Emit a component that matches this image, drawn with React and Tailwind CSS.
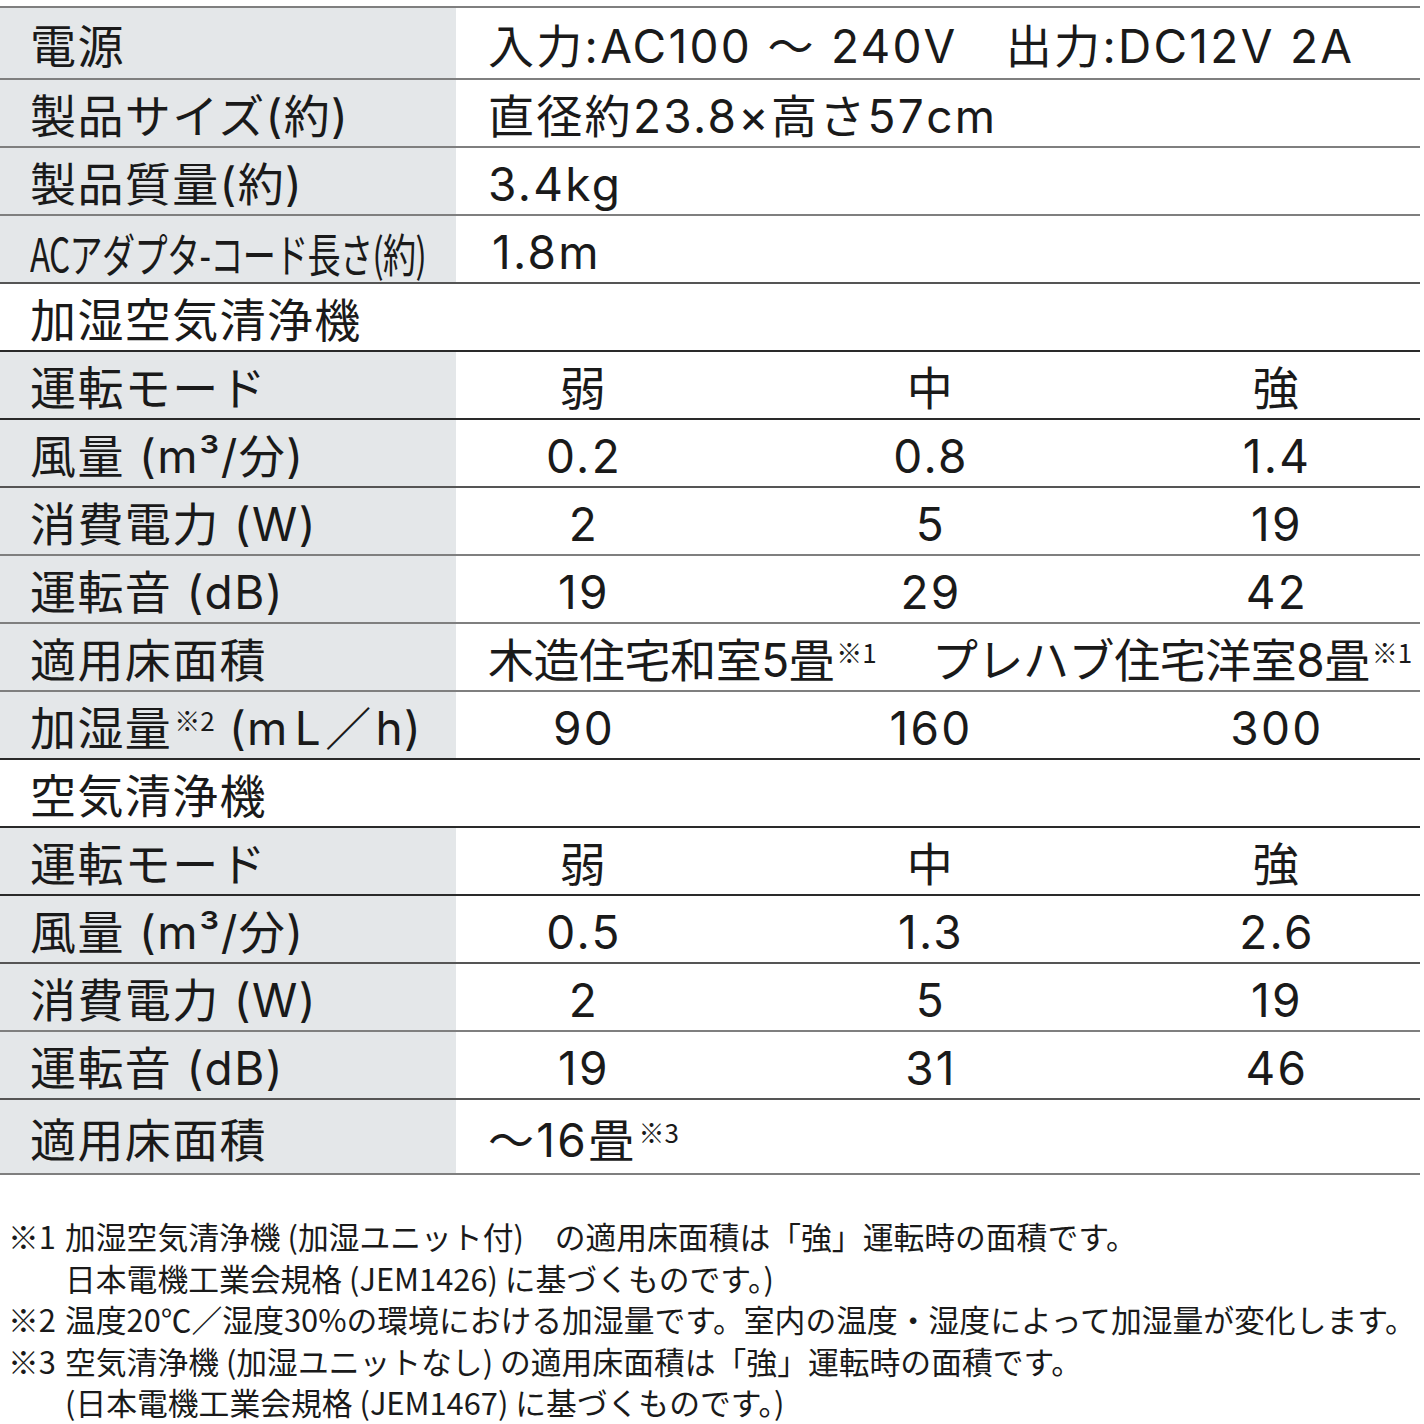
/**
 * SpecTable - product specifications sheet
 * Gray label column, centered 3-mode value columns, footnotes below
 */

import React from 'react'

const LINE = 'border-[#7f7f7f]'
const DARK = 'border-[#2a2a2a]'

function Sup({ children }) {
  return (
    <span className="text-[26px] relative -top-[14px] ml-[2px] tracking-normal font-['Noto_Sans_CJK_JP',sans-serif]">
      {children}
    </span>
  )
}

function Row({ label, children, tall = false, top = false, line = LINE }) {
  return (
    <div
      className={`flex border-b-2 ${line} ${top ? `border-t-2 ${LINE} h-[74px]` : ''} ${tall ? 'h-[75px]' : ''} ${!top && !tall ? 'h-[68px]' : ''}`}
    >
      <div className="w-[456px] shrink-0 bg-[#e4e7e9] flex items-center pl-[30px] pt-[6px] whitespace-nowrap">
        {label}
      </div>
      <div className="flex-1 flex items-center pt-[6px] whitespace-nowrap tracking-[0.05em]">{children}</div>
    </div>
  )
}

function Section({ title, line = DARK }) {
  return (
    <div className={`h-[68px] flex items-center pl-[30px] pt-[6px] border-b-2 ${line}`}>{title}</div>
  )
}

function Modes({ values }) {
  return (
    <div className="grid grid-cols-[256px_438px_254px] w-full">
      {values.map((v, i) => (
        <div key={i} className="text-center">{v}</div>
      ))}
    </div>
  )
}

function Note({ mark, lines }) {
  return (
    <div className="flex pl-[8px]">
      <div className="w-[57px] shrink-0">{mark}</div>
      <div>
        {lines.map((l, i) => (
          <div key={i}>{l}</div>
        ))}
      </div>
    </div>
  )
}

export default function App() {
  return (
    <div className="w-[1424px] h-[1424px] overflow-hidden bg-white text-[#1a1a1a] font-['Inter','Noto_Sans_CJK_JP',sans-serif]">
      <div className="w-[1420px] pt-[6px] text-[46px] leading-none tracking-[0.03em]">
        <Row top label="電源">
          <span className="pl-[32px]">入力:AC100 ～ 240V　出力:DC12V 2A</span>
        </Row>
        <Row label="製品サイズ(約)">
          <span className="pl-[32px]">直径約23.8×高さ57cm</span>
        </Row>
        <Row label="製品質量(約)">
          <span className="pl-[32px]">3.4kg</span>
        </Row>
        <Row
          label={
            <span className="inline-block origin-left scale-x-[0.72] tracking-[-0.02em] font-['Noto_Sans_CJK_JP',sans-serif]">
              ACアダプタ-コード長さ(約)
            </span>
          }
          line="border-[#555555]"
        >
          <span className="pl-[36px]">1.8m</span>
        </Row>

        <Section title="加湿空気清浄機" />
        <Row label="運転モード" line={DARK}>
          <Modes values={['弱', '中', '強']} />
        </Row>
        <Row label="風量 (m³/分)" line="border-[#555555]">
          <Modes values={['0.2', '0.8', '1.4']} />
        </Row>
        <Row label="消費電力 (W)">
          <Modes values={['2', '5', '19']} />
        </Row>
        <Row label="運転音 (dB)">
          <Modes values={['19', '29', '42']} />
        </Row>
        <Row label="適用床面積">
          <div className="flex pl-[32px] tracking-[-0.01em]">
            <span className="w-[444px]">
              木造住宅和室5畳<Sup>※1</Sup>
            </span>
            <span>
              プレハブ住宅洋室8畳<Sup>※1</Sup>
            </span>
          </div>
        </Row>
        <Row
          label={
            <span>
              加湿量<Sup>※2</Sup> (m<span className="ml-[6px]">L</span>
              <span className="mx-[3px]">／</span>h)
            </span>
          }
          line={DARK}
        >
          <Modes values={['90', '160', '300']} />
        </Row>

        <Section title="空気清浄機" />
        <Row label="運転モード" line={DARK}>
          <Modes values={['弱', '中', '強']} />
        </Row>
        <Row label="風量 (m³/分)" line="border-[#555555]">
          <Modes values={['0.5', '1.3', '2.6']} />
        </Row>
        <Row label="消費電力 (W)">
          <Modes values={['2', '5', '19']} />
        </Row>
        <Row label="運転音 (dB)" line="border-[#555555]">
          <Modes values={['19', '31', '46']} />
        </Row>
        <Row tall label="適用床面積">
          <span className="pl-[32px]">
            ～16畳<Sup>※3</Sup>
          </span>
        </Row>
      </div>

      {/* Footnotes */}
      <div className="mt-[40px] text-[30.8px] leading-[41.5px] whitespace-nowrap font-['Noto_Sans_CJK_JP',sans-serif]">
        <Note
          mark="※1"
          lines={[
            '加湿空気清浄機 (加湿ユニット付)　の適用床面積は「強」運転時の面積です。',
            '日本電機工業会規格 (JEM1426) に基づくものです。)',
          ]}
        />
        <Note
          mark="※2"
          lines={['温度20℃／湿度30%の環境における加湿量です。室内の温度・湿度によって加湿量が変化します。']}
        />
        <Note
          mark="※3"
          lines={[
            '空気清浄機 (加湿ユニットなし) の適用床面積は「強」運転時の面積です。',
            '(日本電機工業会規格 (JEM1467) に基づくものです。)',
          ]}
        />
      </div>
    </div>
  )
}
